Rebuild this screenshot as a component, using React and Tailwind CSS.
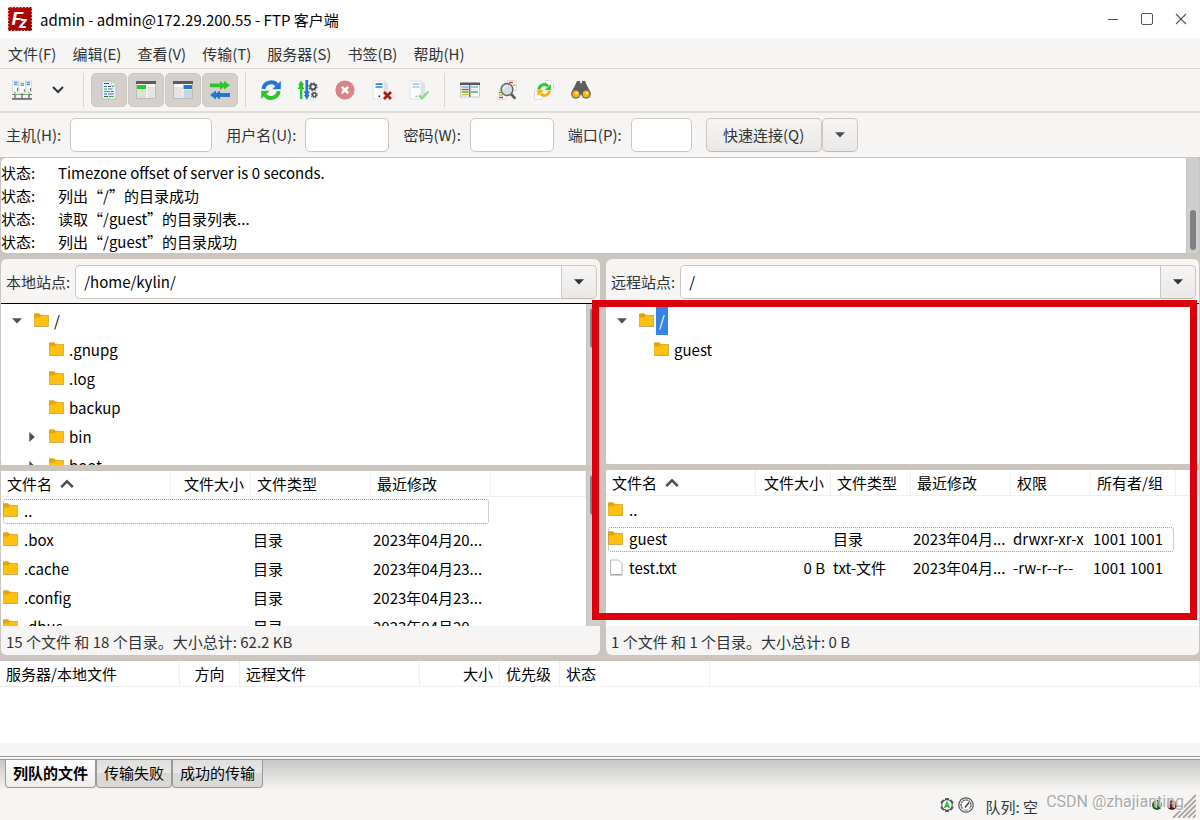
import React from "react";

/* ---------- icons ---------- */

function Icon({ children, className = "h-5 w-5" }) {
  return (
    <svg viewBox="0 0 20 20" className={"block shrink-0 " + className} aria-hidden="true">
      {children}
    </svg>
  );
}

const Logo = () => (
  <svg viewBox="0 0 24 24" className="block h-6 w-6 shrink-0" aria-hidden="true">
    <defs>
      <linearGradient id="logoRed" x1="0" y1="0" x2="1" y2="1">
        <stop offset="0" stopColor="#c80808" />
        <stop offset="1" stopColor="#8d0000" />
      </linearGradient>
    </defs>
    <rect x="0" y="0" width="24" height="24" fill="url(#logoRed)" />
    <rect x="0.4" y="0.4" width="23.2" height="23.2" fill="none" stroke="#fff" strokeWidth="0.9" strokeDasharray="1.2 2.1" />
    <text x="3.5" y="18" fontFamily="Liberation Sans, sans-serif" fontSize="19" fontWeight="700" fontStyle="italic" fill="#fff">F</text>
    <text x="11" y="20.5" fontFamily="Liberation Sans, sans-serif" fontSize="16" fontWeight="700" fontStyle="italic" fill="#fff" stroke="#a00303" strokeWidth="1.2" paintOrder="stroke">z</text>
  </svg>
);

const Folder = () => (
  <svg viewBox="0 0 15 15" className="block h-[15px] w-[15px] shrink-0" aria-hidden="true">
    <path d="M0 1.5Q0 .6 1 .6H5L6.4 2H14.2Q15 2 15 3V13Q15 14 14 14H1Q0 14 0 13Z" fill="#b9a36b" />
    <path d="M0 1.2Q0 .6 1 .6H5L6.4 1.8H9V5H0Z" fill="#e4a40c" />
    <path d="M.4 4.6H5.4L7.4 2.4H14.5V13.2H.4Z" fill="#ffc010" />
  </svg>
);

const Page = () => (
  <svg viewBox="0 0 15 17" className="block h-[17px] w-[15px] shrink-0" aria-hidden="true">
    <path d="M2.5 1H10.5L14 4.5V15.5H2.5Z" fill="#fff" stroke="#b4b7b4" strokeLinejoin="round" />
    <path d="M2.5 16H14" stroke="#9b9e9b" />
  </svg>
);

const SiteManager = () => (
  <Icon>
    <g stroke="#b9bdc0" strokeWidth="0.5">
      <rect x="0.5" y="1" width="6" height="11" fill="#f4f6f7" />
      <rect x="13.5" y="1" width="6" height="11" fill="#f4f6f7" />
      <rect x="7" y="2" width="6.5" height="11" fill="#fff" />
    </g>
    <path d="M2 2.5H5.5M14.5 2.5H18M8.5 3.6H12M2 4.5H5.5M14.5 4.5H18M8.5 5.4H12" stroke="#5c9bdc" strokeWidth="1.3" />
    <path d="M5.5 8V11M18.5 8V11M12.3 9V12" stroke="#777" />
    <path d="M0 14.5H20M3 12V14M10 13V15M17 12V14" stroke="#6fae74" />
    <path d="M0 14.5H3M8 14.5H12M17 14.5H20" stroke="#777" strokeWidth="1.2" />
    <path d="M3 15V18M10 15V18M17 15V18" stroke="#777" strokeWidth="1.5" />
    <path d="M0 18.9H20" stroke="#777" strokeWidth="2" />
  </Icon>
);

const LogIcon = () => (
  <Icon>
    <path d="M3 1H12.5L17 5.5V19H3Z" fill="#eef1f2" stroke="#b1b5b6" strokeWidth="0.8" />
    <path d="M12.5 1V5.5H17Z" fill="#fff" stroke="#b1b5b6" strokeWidth="0.6" />
    <path d="M5 3.5H10M9 6.5H12M12 11.5H14.5M5 16.5H9" stroke="#4e5556" strokeWidth="1.1" />
    <path d="M5 6.5H8M9 9H13.5M9 14H15" stroke="#2f7fd2" strokeWidth="1.1" />
    <path d="M13 6.5H15M5 9H8M5 11.5H11M10 16.5H15" stroke="#33b83f" strokeWidth="1.1" />
    <path d="M5 14H8" stroke="#2f7fd2" strokeWidth="1.1" />
  </Icon>
);

const LocalTree = () => (
  <Icon>
    <rect x="0.5" y="1.5" width="19" height="17" fill="#f7f7f7" stroke="#a9a8a6" strokeWidth="0.7" />
    <rect x="0" y="1" width="20" height="3" fill="#5b5c5b" />
    <rect x="1" y="5" width="9" height="4" fill="#28c828" />
    <rect x="1" y="9" width="9" height="9" fill="#cfe8cf" />
    <rect x="11.5" y="7" width="7" height="11" fill="#e4e4e4" />
  </Icon>
);

const RemoteTree = () => (
  <Icon>
    <rect x="0.5" y="1.5" width="19" height="17" fill="#f7f7f7" stroke="#a9a8a6" strokeWidth="0.7" />
    <rect x="0" y="1" width="20" height="3" fill="#5b5c5b" />
    <rect x="10.5" y="5" width="8.5" height="4" fill="#1f78d4" />
    <rect x="10.5" y="10" width="8.5" height="8" fill="#c5d6e6" />
    <rect x="1" y="7" width="8.5" height="11" fill="#e4e4e4" />
  </Icon>
);

const QueueIcon = () => (
  <Icon>
    <path d="M0 3.5H10V1L14 3.8V1L20 5.3L14 9.5V7L10 9.7V7.3H0Z" fill="#2cc62c" />
    <path d="M20 13H10V10.6L6 13.2V10.6L0 15L6 19.4V16.7L10 19.4V17H20Z" fill="#1f78d4" />
  </Icon>
);

const Refresh = () => (
  <Icon>
    <path d="M2.5 9A7.6 7.2 0 0 1 16 5" fill="none" stroke="#1f78d4" strokeWidth="4" />
    <path d="M19.8 1V9.3H11.3Z" fill="#1f78d4" />
    <path d="M17.5 11A7.6 7.2 0 0 1 4 15.3" fill="none" stroke="#2cc62c" strokeWidth="4" />
    <path d="M.2 19V10.8H8.7Z" fill="#2cc62c" />
  </Icon>
);

const Process = () => (
  <Icon>
    <path d="M2 19V9H0V7.5H1V5H0L3.1.5L6.2 5H5V7.5H6V9H4.4V19Z" fill="#2cc62c" />
    <path d="M7.4 0V11.5H6V13H7V15H6L8.8 19.8L11.6 15H10.6V13H11.6V11.5H10.2V0Z" fill="#1f78d4" />
    <circle cx="15" cy="6.8" r="2.6" fill="none" stroke="#4d5152" strokeWidth="1.7" />
    <circle cx="15" cy="6.8" r="3.9" fill="none" stroke="#4d5152" strokeWidth="1.3" strokeDasharray="1.5 1.56" />
    <circle cx="16.3" cy="14.8" r="1.8" fill="none" stroke="#4d5152" strokeWidth="1.4" />
    <circle cx="16.3" cy="14.8" r="2.9" fill="none" stroke="#4d5152" strokeWidth="1.1" strokeDasharray="1.2 1.1" />
  </Icon>
);

const Cancel = () => (
  <Icon>
    <circle cx="10" cy="10" r="9.6" fill="#d98484" />
    <path d="M6.8 6.8L13.2 13.2M13.2 6.8L6.8 13.2" stroke="#fff" strokeWidth="2.6" />
  </Icon>
);

const Server = ({ blue, dot }) => (
  <>
    <path d="M1 1H12V19H1Z" fill="#fbfcfc" stroke="#d2d5d6" strokeWidth="0.6" />
    <path d="M12 1L16 3.5V17L12 19Z" fill="#dfe2e4" />
    <path d="M3.5 4.2H10.5M3.5 7H10.5" stroke={blue} strokeWidth="1.7" />
    <rect x="6.5" y="15.5" width="1.6" height="1.6" fill={dot} />
  </>
);

const Disconnect = () => (
  <Icon>
    <Server blue="#2a7fd6" dot="#333" />
    <path d="M12 12L19 19M19 12L12 19" stroke="#b81414" strokeWidth="2.6" />
  </Icon>
);

const Reconnect = () => (
  <Icon>
    <Server blue="#a4c9ec" dot="#aaa" />
    <path d="M9.8 15.3L13 18.3L19.3 11.5" fill="none" stroke="#8fd694" strokeWidth="2.4" />
  </Icon>
);

const Filter = () => (
  <Icon>
    <rect x="0.5" y="3.5" width="19" height="13.5" fill="#fff" stroke="#b5b5b5" strokeWidth="0.7" />
    <rect x="0" y="2.5" width="20" height="2.6" fill="#575958" />
    <path d="M9.8 5V17" stroke="#575958" strokeWidth="1.2" />
    <path d="M1.5 7H8.8M11 7H18" stroke="#3c86cf" strokeWidth="1.2" />
    <path d="M1.5 9.5H8.8" stroke="#c83c3c" strokeWidth="1.4" />
    <path d="M1.5 12H8.8M11 12H18" stroke="#35bd3a" strokeWidth="1.4" />
    <path d="M1.5 14.8H8.8" stroke="#eeb423" strokeWidth="1.4" />
    <path d="M11 9.5H18" stroke="#dedede" strokeWidth="1.2" />
  </Icon>
);

const Compare = () => (
  <Icon>
    <path d="M10.5 .5H17L19.5 3V10H10.5Z" fill="#fff" stroke="#c4c4c4" strokeWidth="0.6" />
    <path d="M1 10H9V19.5H1Z" fill="#fff" stroke="#c4c4c4" strokeWidth="0.6" />
    <path d="M12 2.5H16M2 17.5H6" stroke="#c83c3c" strokeWidth="1.4" />
    <path d="M16 5H18.5M2 15H6" stroke="#eeb423" strokeWidth="1.4" />
    <path d="M2 12.5H4" stroke="#35bd3a" strokeWidth="1.4" />
    <path d="M13.5 13.5L18.3 18.7" stroke="#565857" strokeWidth="2.6" />
    <circle cx="10" cy="9.5" r="5.9" fill="#d5dce0" stroke="#666868" strokeWidth="1.5" />
    <path d="M6.5 9A3.8 3.8 0 0 1 11 6" stroke="#fff" strokeWidth="1.3" fill="none" />
  </Icon>
);

const SyncBrowse = () => (
  <Icon>
    <path d="M11.5 .5H17L19.5 3V10H11.5Z" fill="#fff" stroke="#c9c9c9" strokeWidth="0.6" />
    <path d="M.5 10H8.5V19.5H.5Z" fill="#fff" stroke="#c9c9c9" strokeWidth="0.6" />
    <path d="M2 12H4M2 14.5H4M16 2.5H18" stroke="#d8d8d8" />
    <path d="M5 9.3A5.2 5 0 0 1 14 6.2" fill="none" stroke="#2cc62c" strokeWidth="3" />
    <path d="M16.8 4V10H10.8Z" fill="#2cc62c" />
    <path d="M15.4 10.7A5.2 5 0 0 1 6.4 13.8" fill="none" stroke="#f5b21a" strokeWidth="3" />
    <path d="M3.6 16V10H9.6Z" fill="#f5b21a" />
  </Icon>
);

const Binoculars = () => (
  <Icon>
    <path d="M6 1H8.8L9.2 3.2H10.8L11.2 1H14L15.5 4.5L19.6 12.5L14 17L9 14L6 17L.4 12.5L4.5 4.5Z" fill="#5c5e5d" />
    <circle cx="4.9" cy="14" r="4.7" fill="#5c5e5d" />
    <circle cx="15.1" cy="14" r="4.7" fill="#5c5e5d" />
    <circle cx="4.9" cy="14" r="3.5" fill="#f8b315" />
    <circle cx="15.1" cy="14" r="3.5" fill="#f8b315" />
    <circle cx="5.6" cy="13" r="1.3" fill="#ffe9a8" />
    <circle cx="15.8" cy="13" r="1.3" fill="#ffe9a8" />
  </Icon>
);

const DownTriangle = ({ className }) => (
  <svg viewBox="0 0 10 6" className={"block h-1.5 w-2.5 shrink-0 " + className} aria-hidden="true">
    <path d="M0 .3H10L5 5.6Z" fill="currentColor" />
  </svg>
);

const RightTriangle = () => (
  <svg viewBox="0 0 6 10" className="block h-2.5 w-1.5 shrink-0 text-[#4c4f50]" aria-hidden="true">
    <path d="M.3 0L5.8 5L.3 10Z" fill="currentColor" />
  </svg>
);

const SortUp = () => (
  <svg viewBox="0 0 14 10" className="block h-2.5 w-3.5" aria-hidden="true">
    <path d="M1.2 8.2L7 2.4L12.8 8.2" fill="none" stroke="#4c4f50" strokeWidth="2.6" />
  </svg>
);

/* ---------- shared controls ---------- */

const gtkButton =
  "flex h-[34px] items-center justify-center border border-[#cdc7c2] border-b-[#bfb8b1] bg-linear-to-b from-[#f6f5f4] to-[#ebe9e7] text-[#2e3436]";

function ToolButton({ label, active, children }) {
  return (
    <button
      type="button"
      aria-label={label}
      aria-pressed={active}
      className={
        "flex h-[34px] w-9 items-center justify-center rounded-[5px] border " +
        (active ? "border-[#cdc7c2] bg-[#d5d0cc]" : "border-transparent")
      }
    >
      {children}
    </button>
  );
}

const Separator = () => <div className="mx-[7px] h-[34px] w-px bg-[#d9d6d3]" />;

function Field({ id, label, type = "text", width }) {
  return (
    <div className="mr-3.5 flex items-center gap-[9px]">
      <label htmlFor={id} className="pb-0.5">{label}</label>
      <input id={id} type={type} className={"h-[34px] rounded-[5px] border border-[#cdc7c2] bg-white px-2 outline-none " + width} />
    </div>
  );
}

function ScrollStrip() {
  return (
    <div className="flex w-[14px] shrink-0 justify-center border-l border-[#c4c4c4] bg-[#cececf] pt-1">
      <div className="h-10 w-[7px] rounded-full bg-[#7e8182]" />
    </div>
  );
}

function SiteBar({ id, label, value }) {
  return (
    <div className="flex h-[45px] shrink-0 items-end gap-[5px] border-b border-black pr-[3px] pb-1 pl-[5px]">
      <label htmlFor={id} className="flex h-[34px] items-center pb-0.5">{label}</label>
      <div className="flex min-w-0 flex-1">
        <input
          id={id}
          defaultValue={value}
          className="h-[34px] min-w-0 flex-1 rounded-l-[5px] border border-r-0 border-[#cdc7c2] bg-white px-2 pb-0.5 text-black outline-none"
        />
        <button type="button" aria-label={label} className={gtkButton + " w-9 rounded-r-[5px]"}>
          <DownTriangle className="text-[#2e3436]" />
        </button>
      </div>
    </div>
  );
}

function TreeRow({ name, level, arrow, selected }) {
  return (
    <li className="flex h-[29px] items-center">
      <span className={"flex shrink-0 justify-center " + (level === 0 ? "mr-3 ml-[11px] w-2.5" : "mr-3.5 ml-7 w-1.5")}>
        {arrow === "down" && <DownTriangle className="text-[#4c4f50]" />}
        {arrow === "right" && <RightTriangle />}
      </span>
      <Folder />
      <span
        className={
          selected
            ? "ml-0.5 flex h-full items-center bg-[#3584e4] px-[3px] text-white"
            : "px-[5px]"
        }
      >
        {name}
      </span>
    </li>
  );
}

const th = "h-[26px] border-r border-b border-[#f0efee] px-1.5 py-0 font-normal whitespace-nowrap";
const td = "h-[29px] px-0.5 pt-0 pb-0.5 whitespace-nowrap";
const focusFrame =
  " relative after:pointer-events-none after:absolute after:top-0.5 after:left-0.5 after:h-[25px] after:rounded-[3px] after:border after:border-dotted after:border-[#999]";

function NameCell({ icon, name, focus = "" }) {
  return (
    <td className={td + focus}>
      <div className="flex items-center gap-1.5">
        {icon === "page" ? <Page /> : <Folder />}
        <span>{name}</span>
      </div>
    </td>
  );
}

/* ---------- data ---------- */

const menus = ["文件(F)", "编辑(E)", "查看(V)", "传输(T)", "服务器(S)", "书签(B)", "帮助(H)"];

const logLines = [
  "Timezone offset of server is 0 seconds.",
  "列出“/”的目录成功",
  "读取“/guest”的目录列表...",
  "列出“/guest”的目录成功",
];

const localTree = [
  { name: "/", level: 0, arrow: "down" },
  { name: ".gnupg", level: 1 },
  { name: ".log", level: 1 },
  { name: "backup", level: 1 },
  { name: "bin", level: 1, arrow: "right" },
  { name: "boot", level: 1, arrow: "right" },
];

const localFiles = [
  { name: ".." },
  { name: ".box", type: "目录", date: "2023年04月20..." },
  { name: ".cache", type: "目录", date: "2023年04月23..." },
  { name: ".config", type: "目录", date: "2023年04月23..." },
  { name: ".dbus", type: "目录", date: "2023年04月20..." },
];

const remoteFiles = [
  { name: ".." },
  { name: "guest", type: "目录", date: "2023年04月...", perm: "drwxr-xr-x", owner: "1001 1001" },
  { name: "test.txt", icon: "page", size: "0 B", type: "txt-文件", date: "2023年04月...", perm: "-rw-r--r--", owner: "1001 1001" },
];

/* ---------- panels ---------- */

function SortableName() {
  return (
    <span className="flex items-center gap-2">
      文件名 <SortUp />
    </span>
  );
}

function LocalPane() {
  return (
    <section className="flex min-h-0 min-w-0 flex-col overflow-hidden rounded-md border-l border-[#cbc5bf] bg-[#f6f5f4]">
      <SiteBar id="local-site" label="本地站点:" value="/home/kylin/" />
      <div className="flex min-h-0 flex-[161] basis-0 overflow-hidden rounded-bl-md bg-white text-black">
        <ul className="flex-1 pt-0.5">
          {localTree.map((n) => (
            <TreeRow key={n.name} {...n} />
          ))}
        </ul>
        <ScrollStrip />
      </div>
      <div className="h-1.5 shrink-0 bg-[#cbc5bf]" />
      <div className="flex min-h-0 flex-[155] basis-0 overflow-hidden bg-white text-black">
        <div className="min-w-0 flex-1">
          <table className="w-full table-fixed border-separate border-spacing-0 text-left">
            <colgroup>
              <col className="w-[170px]" />
              <col className="w-20" />
              <col className="w-[120px]" />
              <col className="w-[120px]" />
              <col />
            </colgroup>
            <thead>
              <tr>
                <th className={th}><SortableName /></th>
                <th className={th + " text-right"}>文件大小</th>
                <th className={th}>文件类型</th>
                <th className={th}>最近修改</th>
                <th className={th} aria-label="空" />
              </tr>
            </thead>
            <tbody>
              {localFiles.map((f, i) => (
                <tr key={f.name}>
                  <NameCell name={f.name} focus={i === 0 ? focusFrame + " after:w-[486px]" : ""} />
                  <td className={td} />
                  <td className={td}>{f.type}</td>
                  <td className={td}>{f.date}</td>
                  <td className={td} />
                </tr>
              ))}
            </tbody>
          </table>
        </div>
        <ScrollStrip />
      </div>
      <p className="flex h-[29px] shrink-0 items-center px-[5px] pt-0.5">15 个文件 和 18 个目录。大小总计: 62.2 KB</p>
    </section>
  );
}

function RemotePane() {
  return (
    <section className="relative flex min-h-0 min-w-0 flex-col">
      <div className="flex min-h-0 flex-1 flex-col overflow-hidden rounded-md border-r border-[#cbc5bf] bg-[#f6f5f4]">
        <SiteBar id="remote-site" label="远程站点:" value="/" />
        <div className="min-h-0 flex-[160] basis-0 overflow-hidden rounded-b-md bg-white text-black">
          <ul className="pt-0.5">
            <TreeRow name="/" level={0} arrow="down" selected />
            <TreeRow name="guest" level={1} />
          </ul>
        </div>
        <div className="h-1.5 shrink-0 bg-[#cbc5bf]" />
        <div className="min-h-0 flex-[156] basis-0 overflow-hidden rounded-t-md bg-white text-black">
          <table className="w-full table-fixed border-separate border-spacing-0 text-left">
            <colgroup>
              <col className="w-[150px]" />
              <col className="w-[75px]" />
              <col className="w-20" />
              <col className="w-[100px]" />
              <col className="w-20" />
              <col className="w-[85px]" />
              <col />
            </colgroup>
            <thead>
              <tr>
                <th className={th}><SortableName /></th>
                <th className={th + " text-right"}>文件大小</th>
                <th className={th}>文件类型</th>
                <th className={th}>最近修改</th>
                <th className={th}>权限</th>
                <th className={th}>所有者/组</th>
                <th className={th} aria-label="空" />
              </tr>
            </thead>
            <tbody>
              {remoteFiles.map((f, i) => (
                <tr key={f.name}>
                  <NameCell name={f.name} icon={f.icon} focus={i === 1 ? focusFrame + " after:w-[566px]" : ""} />
                  <td className="h-[29px] px-1.5 pt-0 pb-0.5 text-right whitespace-nowrap">{f.size}</td>
                  <td className={td}>{f.type}</td>
                  <td className={td}>{f.date}</td>
                  <td className={td}>{f.perm}</td>
                  <td className={td}>{f.owner}</td>
                  <td className={td} />
                </tr>
              ))}
            </tbody>
          </table>
        </div>
        <p className="flex h-[29px] shrink-0 items-center px-[5px] pt-0.5">1 个文件 和 1 个目录。大小总计: 0 B</p>
      </div>
      <div className="pointer-events-none absolute top-[41px] right-[3px] bottom-[35px] -left-3.5 border-[7px] border-[#dc000f]" />
    </section>
  );
}

export default function App() {
  return (
    <div
      lang="zh-CN"
      className="flex h-screen min-h-[700px] flex-col overflow-hidden bg-[#f6f5f4] font-['Noto_Sans_CJK_SC',sans-serif] text-[15px] leading-[23px] text-[#2e3436]"
    >
      <header className="flex h-[38px] shrink-0 items-center bg-white pr-3 pl-2 text-black">
        <Logo />
        <h1 className="ml-2 flex-1">admin - admin@172.29.200.55 - FTP 客户端</h1>
        <div className="flex text-[#555]">
          <button type="button" aria-label="最小化" className="flex h-6 w-[34px] items-center justify-center">
            <svg viewBox="0 0 14 14" className="h-3.5 w-3.5"><path d="M2 7.5H12" stroke="currentColor" /></svg>
          </button>
          <button type="button" aria-label="最大化" className="flex h-6 w-[34px] items-center justify-center">
            <svg viewBox="0 0 14 14" className="h-3.5 w-3.5"><rect x="1.5" y="1.5" width="11" height="11" rx="1.5" fill="none" stroke="currentColor" /></svg>
          </button>
          <button type="button" aria-label="关闭" className="flex h-6 w-6 items-center justify-end">
            <svg viewBox="0 0 14 14" className="h-3.5 w-3.5"><path d="M2 2L12 12M12 2L2 12" stroke="currentColor" strokeWidth="1.1" /></svg>
          </button>
        </div>
      </header>

      <nav className="flex h-[31px] shrink-0 items-center border-b border-[#d9d6d3]">
        {menus.map((m) => (
          <button key={m} type="button" className="px-2">{m}</button>
        ))}
      </nav>

      <div className="flex h-11 shrink-0 items-center border-b-2 border-[#dedbd9] pl-1">
        <ToolButton label="站点管理器"><SiteManager /></ToolButton>
        <ToolButton label="站点列表">
          <svg viewBox="0 0 12 8" className="h-2 w-3"><path d="M1 1L6 6L11 1" fill="none" stroke="#2e3436" strokeWidth="2" /></svg>
        </ToolButton>
        <Separator />
        <div className="flex gap-px">
          <ToolButton label="消息日志" active><LogIcon /></ToolButton>
          <ToolButton label="本地目录树" active><LocalTree /></ToolButton>
          <ToolButton label="远程目录树" active><RemoteTree /></ToolButton>
          <ToolButton label="传输队列" active><QueueIcon /></ToolButton>
        </div>
        <Separator />
        <div className="flex gap-px">
          <ToolButton label="刷新"><Refresh /></ToolButton>
          <ToolButton label="处理队列"><Process /></ToolButton>
          <ToolButton label="取消"><Cancel /></ToolButton>
          <ToolButton label="断开连接"><Disconnect /></ToolButton>
          <ToolButton label="重新连接"><Reconnect /></ToolButton>
        </div>
        <Separator />
        <div className="flex gap-px">
          <ToolButton label="过滤器"><Filter /></ToolButton>
          <ToolButton label="目录对比"><Compare /></ToolButton>
          <ToolButton label="同步浏览"><SyncBrowse /></ToolButton>
          <ToolButton label="搜索"><Binoculars /></ToolButton>
        </div>
      </div>

      <form className="flex h-11 shrink-0 items-center pl-1.5" onSubmit={(e) => e.preventDefault()}>
        <Field id="host" label="主机(H):" width="w-[142px]" />
        <Field id="user" label="用户名(U):" width="w-[84px]" />
        <Field id="pass" label="密码(W):" type="password" width="w-[84px]" />
        <Field id="port" label="端口(P):" width="w-[61px]" />
        <button type="submit" className={gtkButton + " w-[116px] rounded-[5px] pb-0.5"}>快速连接(Q)</button>
        <button type="button" aria-label="快速连接历史" className={gtkButton + " w-9 rounded-[5px]"}>
          <DownTriangle className="text-[#4c4f50]" />
        </button>
      </form>

      <div className="flex min-h-0 flex-1 flex-col bg-[#cbc5bf]">
        <section className="flex h-24 shrink-0 overflow-hidden rounded-md border border-b-0 border-[#cbc5bf] bg-white text-black">
          <ul className="min-w-0 flex-1 pt-[3px]">
            {logLines.map((t) => (
              <li key={t} className="flex">
                <span className="w-[57px] shrink-0">状态:</span>
                <span>{t}</span>
              </li>
            ))}
          </ul>
          <div className="flex w-[13px] shrink-0 items-end justify-center border-l border-[#c4c4c4] bg-[#cececf] pb-[3px]">
            <div className="h-10 w-1.5 rounded-full bg-[#7e8182]" />
          </div>
        </section>

        <main className="mt-1.5 grid min-h-0 flex-1 grid-cols-[100fr_1fr_99fr] grid-rows-[minmax(0,1fr)]">
          <LocalPane />
          <div />
          <RemotePane />
        </main>

        <section className="mt-1.5 h-[82px] shrink-0 bg-white text-black">
          <table className="w-full table-fixed border-separate border-spacing-0 text-left">
            <colgroup>
              <col className="w-[180px]" />
              <col className="w-[60px]" />
              <col className="w-[180px]" />
              <col className="w-20" />
              <col className="w-[60px]" />
              <col className="w-[150px]" />
              <col />
            </colgroup>
            <thead>
              <tr>
                <th className={th}>服务器/本地文件</th>
                <th className={th + " text-center"}>方向</th>
                <th className={th}>远程文件</th>
                <th className={th + " text-right"}>大小</th>
                <th className={th}>优先级</th>
                <th className={th}>状态</th>
                <th className={th} aria-label="空" />
              </tr>
            </thead>
          </table>
        </section>
      </div>

      <div className="mt-[13px] h-1 shrink-0 border-y border-[#999] bg-[#f6f5f4]" />
      <div role="tablist" className="flex h-[30px] shrink-0 items-start bg-linear-to-b from-[#c8c8c7] to-[#f6f5f4] pl-[5px] text-black">
        <button
          type="button"
          role="tab"
          aria-selected="true"
          className="h-7 rounded-b-[4px] border border-t-0 border-[#999] bg-linear-to-b from-white to-[#eeedec] px-[7px] pb-[3px] font-bold"
        >
          列队的文件
        </button>
        {["传输失败", "成功的传输"].map((t) => (
          <button
            key={t}
            type="button"
            role="tab"
            aria-selected="false"
            className="h-7 rounded-b-[4px] border border-t-0 border-[#999] bg-linear-to-b from-[#dededd] from-0% via-[#e9e9e8] via-50% to-[#dad9d8] to-50% px-[7px] pb-[3px]"
          >
            {t}
          </button>
        ))}
      </div>

      <footer className="relative flex h-[30px] shrink-0 items-center justify-end">
        <svg viewBox="0 0 16 16" className="h-4 w-4" aria-hidden="true">
          <path d="M6.3 1H9.7L10.2 3L12.2 2.4L14.6 5.2L13.6 7V9L14.6 10.8L12.2 13.6L10.2 13L9.7 15H6.3L5.8 13L3.8 13.6L1.4 10.8L2.4 9V7L1.4 5.2L3.8 2.4L5.8 3Z" fill="#555957" />
          <circle cx="8" cy="8" r="4.7" fill="#fff" />
          <path d="M5.6 11L8 5.2L10.4 11M6.4 9.3H9.6" fill="none" stroke="#22bb33" strokeWidth="1.5" />
        </svg>
        <svg viewBox="0 0 16 16" className="ml-[3px] h-4 w-4" aria-hidden="true">
          <circle cx="8" cy="8" r="7.2" fill="#fff" stroke="#555957" strokeWidth="1.2" />
          <path d="M4.6 11.6A5 5 0 1 1 11.4 11.6" fill="none" stroke="#666a68" strokeWidth="1.5" strokeDasharray="2.2 0.6" />
          <path d="M7 10.5L11 5.5" stroke="#444" strokeWidth="1.6" />
          <path d="M5.5 13H10.5" stroke="#888" />
        </svg>
        <span className="mr-[113px] ml-[11px] pt-0.5">队列: 空</span>
        <svg viewBox="0 0 12 12" className="h-3 w-3" aria-hidden="true">
          <circle cx="6" cy="6" r="5" fill="#0f5e12" />
          <ellipse cx="5" cy="4" rx="2.4" ry="1.6" fill="#4f9c50" />
        </svg>
        <svg viewBox="0 0 12 12" className="mr-[22px] ml-[3px] h-3 w-3" aria-hidden="true">
          <circle cx="6" cy="6" r="5" fill="#5e0f10" />
          <ellipse cx="5" cy="4" rx="2.4" ry="1.6" fill="#9c4f50" />
        </svg>
        <svg viewBox="0 0 24 24" className="absolute right-1 bottom-0.5 h-6 w-6" aria-hidden="true">
          <path d="M1 24L24 1M6 24L24 6M11 24L24 11M16 24L24 16M21 24L24 21" stroke="#a8a49f" strokeWidth="1.8" />
        </svg>
        <span className="absolute right-4 bottom-2 font-[Roboto,sans-serif] text-base leading-5 text-[#a9a9a9] [text-shadow:0_0_1px_#fff,1px_1px_0_#ffffffcc]">
          CSDN @zhajianting
        </span>
      </footer>
    </div>
  );
}
